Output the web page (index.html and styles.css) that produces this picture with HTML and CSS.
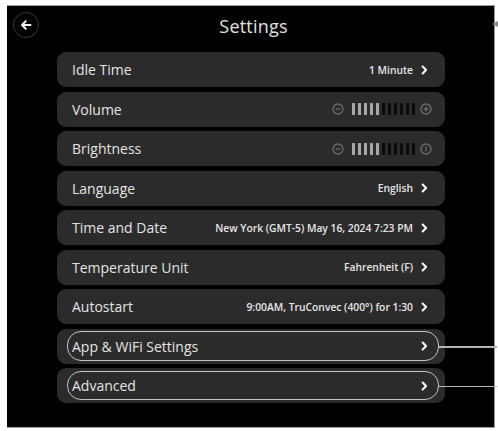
FILE: index.html
```html
<!DOCTYPE html>
<html lang="en">
<head>
<meta charset="utf-8">
<title>Settings</title>
<link rel="stylesheet" href="styles.css">
</head>
<body>
<div class="screen">
  <header class="top">
    <button class="back" aria-label="Back">
      <svg viewBox="0 0 12 12" width="12" height="12"><path d="M10.5 6H2M5.8 2.2L2 6l3.8 3.8" fill="none" stroke="#fff" stroke-width="1.9" stroke-linecap="round" stroke-linejoin="round"/></svg>
    </button>
    <h1 class="title">Settings</h1>
    <span class="spacer"></span>
  </header>
  <ul class="list">
    <li class="row"><span class="label">Idle Time</span><span class="value">1 Minute</span><svg class="chev" viewBox="0 0 7 10"><path d="M1.6 1.5L5.1 5 1.6 8.5" fill="none" stroke="#fff" stroke-width="2" stroke-linecap="round" stroke-linejoin="round"/></svg></li>
    <li class="row"><span class="label">Volume</span>
      <span class="slider">
        <svg class="knob" viewBox="0 0 12 12"><circle cx="6" cy="6" r="5" fill="none" stroke="#6a6a6a" stroke-width="1.4"/><path d="M3.6 6h4.8" stroke="#6a6a6a" stroke-width="1.4"/></svg>
        <span class="bars"><i class="on"></i><i class="on"></i><i class="on"></i><i class="on"></i><i class="on"></i><i></i><i></i><i></i><i></i><i></i><i></i></span>
        <svg class="knob" viewBox="0 0 12 12"><circle cx="6" cy="6" r="5" fill="none" stroke="#6a6a6a" stroke-width="1.4"/><path d="M3.6 6h4.8M6 3.6v4.8" stroke="#6a6a6a" stroke-width="1.4"/></svg>
      </span>
    </li>
    <li class="row"><span class="label">Brightness</span>
      <span class="slider">
        <svg class="knob" viewBox="0 0 12 12"><circle cx="6" cy="6" r="5" fill="none" stroke="#6a6a6a" stroke-width="1.4"/><path d="M3.6 6h4.8" stroke="#6a6a6a" stroke-width="1.4"/></svg>
        <span class="bars"><i class="on"></i><i class="on"></i><i class="on"></i><i class="on"></i><i class="on"></i><i></i><i></i><i></i><i></i><i></i><i></i></span>
        <svg class="knob" viewBox="0 0 12 12"><circle cx="6" cy="6" r="5" fill="none" stroke="#6a6a6a" stroke-width="1.4"/><path d="M6 3.6v4.8" stroke="#6a6a6a" stroke-width="1.4"/></svg>
      </span>
    </li>
    <li class="row"><span class="label">Language</span><span class="value">English</span><svg class="chev" viewBox="0 0 7 10"><path d="M1.6 1.5L5.1 5 1.6 8.5" fill="none" stroke="#fff" stroke-width="2" stroke-linecap="round" stroke-linejoin="round"/></svg></li>
    <li class="row"><span class="label">Time and Date</span><span class="value">New York (GMT-5) May 16, 2024 7:23 PM</span><svg class="chev" viewBox="0 0 7 10"><path d="M1.6 1.5L5.1 5 1.6 8.5" fill="none" stroke="#fff" stroke-width="2" stroke-linecap="round" stroke-linejoin="round"/></svg></li>
    <li class="row"><span class="label">Temperature Unit</span><span class="value">Fahrenheit (F)</span><svg class="chev" viewBox="0 0 7 10"><path d="M1.6 1.5L5.1 5 1.6 8.5" fill="none" stroke="#fff" stroke-width="2" stroke-linecap="round" stroke-linejoin="round"/></svg></li>
    <li class="row"><span class="label">Autostart</span><span class="value">9:00AM, TruConvec (400°) for 1:30</span><svg class="chev" viewBox="0 0 7 10"><path d="M1.6 1.5L5.1 5 1.6 8.5" fill="none" stroke="#fff" stroke-width="2" stroke-linecap="round" stroke-linejoin="round"/></svg></li>
    <li class="row marked"><span class="label">App &amp; WiFi Settings</span><svg class="chev" viewBox="0 0 7 10"><path d="M1.6 1.5L5.1 5 1.6 8.5" fill="none" stroke="#fff" stroke-width="2" stroke-linecap="round" stroke-linejoin="round"/></svg></li>
    <li class="row marked"><span class="label">Advanced</span><svg class="chev" viewBox="0 0 7 10"><path d="M1.6 1.5L5.1 5 1.6 8.5" fill="none" stroke="#fff" stroke-width="2" stroke-linecap="round" stroke-linejoin="round"/></svg></li>
  </ul>
  <span class="pointer"></span>
</div>
</body>
</html>
```

FILE: styles.css
```css
* { box-sizing: border-box; }

html, body {
  margin: 0;
  background: #ffffff;
}

body {
  padding: 5px 0 0 7px;
  font-family: "Open Sans", "Noto Sans", "Liberation Sans", sans-serif;
}

.screen {
  position: relative;
  width: 488px;
  height: 423px;
  background: #000;
  border: 1px solid #9a9a9a;
  border-left: 0;
}

.top {
  display: grid;
  grid-template-columns: 1fr auto 1fr;
  align-items: center;
  height: 46px;
  padding: 5px 0 15px 6px;
}

.back {
  width: 26px;
  height: 26px;
  padding: 0;
  border: 1.5px solid #383838;
  border-radius: 50%;
  background: transparent;
  display: flex;
  align-items: center;
  justify-content: center;
}

.title {
  margin: 0;
  padding-top: 3px;
  font-size: 18px;
  font-weight: 500;
  color: #e2e2e2;
  letter-spacing: 0.2px;
}

.list {
  list-style: none;
  margin: 0;
  padding: 0 49px 0 50px;
  display: flex;
  flex-direction: column;
  gap: 4.5px;
}

.row {
  position: relative;
  height: 35px;
  display: flex;
  align-items: center;
  padding: 0 17px 0 15px;
  background: #2b2b2b;
  border-radius: 9px;
}

.label {
  flex: 1;
  font-size: 14px;
  font-weight: 500;
  color: #e4e4e4;
}

.value {
  font-size: 10.3px;
  font-weight: 600;
  color: #e6e6e6;
  margin-right: 8px;
}

.chev {
  width: 7px;
  height: 10px;
}

.slider {
  display: flex;
  align-items: center;
  margin-right: -4px;
}

.knob {
  width: 12px;
  height: 12px;
}

.bars {
  display: flex;
  gap: 3px;
  margin: 0 5px 0 8px;
}

.bars i {
  display: block;
  width: 3px;
  height: 12px;
  background: #0c0c0c;
  border-radius: 0.5px;
}

.bars i.on {
  background: #a8a8a8;
}

.marked::before {
  content: "";
  position: absolute;
  top: 2.5px;
  bottom: 3px;
  left: 10px;
  right: 6px;
  border: 1.5px solid #c4c4c4;
  border-radius: 14px;
}

.marked::after {
  content: "";
  position: absolute;
  top: 50%;
  left: calc(100% - 6px);
  width: 58px;
  height: 1.5px;
  background: #b4b4b4;
}

.pointer {
  position: absolute;
  top: 15px;
  right: -4px;
  width: 0;
  height: 0;
  border-top: 3.5px solid transparent;
  border-bottom: 3.5px solid transparent;
  border-right: 6px solid #8c8c8c;
}
```
